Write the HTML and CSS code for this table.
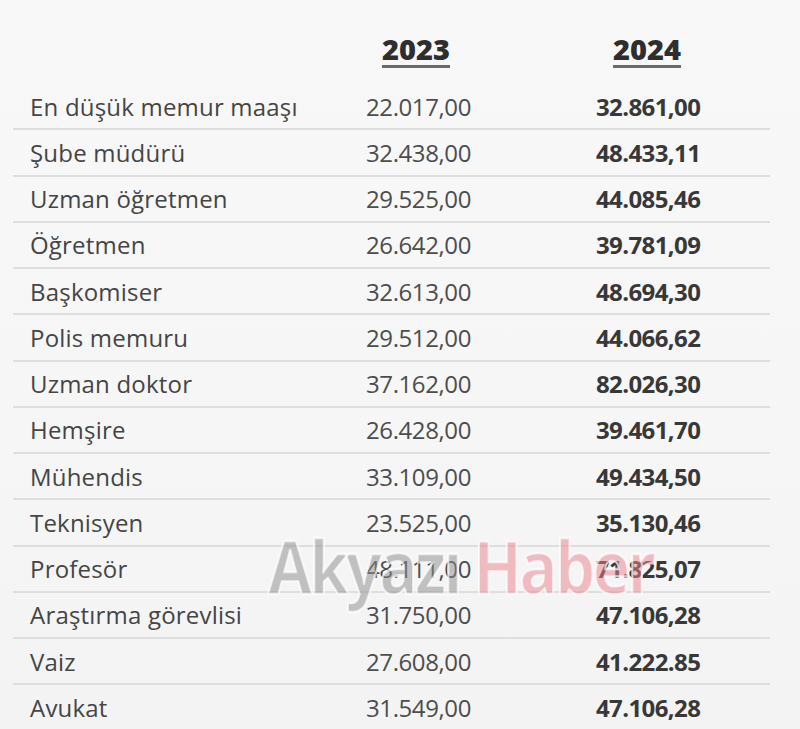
FILE: index.html
```html
<!DOCTYPE html>
<html lang="tr">
<head>
<meta charset="utf-8">
<link rel="stylesheet" href="styles.css">
</head>
<body>
<div class="page">
  <div class="table">
    <div class="row head">
      <div class="label"></div>
      <div class="year y1"><span>2023</span></div>
      <div class="year y2"><span>2024</span></div>
    </div>
    <div class="row"><div class="label">En düşük memur maaşı</div><div class="v1">22.017,00</div><div class="v2">32.861,00</div></div>
    <div class="row"><div class="label">Şube müdürü</div><div class="v1">32.438,00</div><div class="v2">48.433,11</div></div>
    <div class="row"><div class="label">Uzman öğretmen</div><div class="v1">29.525,00</div><div class="v2">44.085,46</div></div>
    <div class="row"><div class="label">Öğretmen</div><div class="v1">26.642,00</div><div class="v2">39.781,09</div></div>
    <div class="row"><div class="label">Başkomiser</div><div class="v1">32.613,00</div><div class="v2">48.694,30</div></div>
    <div class="row"><div class="label">Polis memuru</div><div class="v1">29.512,00</div><div class="v2">44.066,62</div></div>
    <div class="row"><div class="label">Uzman doktor</div><div class="v1">37.162,00</div><div class="v2">82.026,30</div></div>
    <div class="row"><div class="label">Hemşire</div><div class="v1">26.428,00</div><div class="v2">39.461,70</div></div>
    <div class="row"><div class="label">Mühendis</div><div class="v1">33.109,00</div><div class="v2">49.434,50</div></div>
    <div class="row"><div class="label">Teknisyen</div><div class="v1">23.525,00</div><div class="v2">35.130,46</div></div>
    <div class="row"><div class="label">Profesör</div><div class="v1">48.111,00</div><div class="v2">71.825,07</div></div>
    <div class="row"><div class="label">Araştırma görevlisi</div><div class="v1">31.750,00</div><div class="v2">47.106,28</div></div>
    <div class="row"><div class="label">Vaiz</div><div class="v1">27.608,00</div><div class="v2">41.222.85</div></div>
    <div class="row last"><div class="label">Avukat</div><div class="v1">31.549,00</div><div class="v2">47.106,28</div></div>
  </div>
  <div class="watermark"><span class="wm-a">Akyazı</span> <span class="wm-b">Haber</span></div>
</div>
</body>
</html>
```
FILE: styles.css
```css
html, body {
  margin: 0;
  padding: 0;
  background: #f7f7f7;
}
.page {
  position: relative;
  width: 800px;
  height: 729px;
  overflow: hidden;
  font-family: "Open Sans", "Noto Sans", sans-serif;
  background: linear-gradient(180deg, #f8f8f8 0%, #f6f6f6 60%, #f3f3f3 100%);
}
.table {
  display: flex;
  flex-direction: column;
  padding-left: 13px;
  width: 757px;
}
.row {
  display: grid;
  grid-template-columns: 353px 230px 174px;
  align-items: center;
  height: 44.25px;
  border-bottom: 2px solid #dedede;
}
.row.head {
  height: 84px;
  border-bottom: none;
  align-items: start;
}
.row.last { border-bottom: none; }
.label {
  padding-left: 17px;
  font-size: 24px;
  color: #454545;
  letter-spacing: 0.2px;
}
.v1 {
  font-size: 24px;
  color: #4d4d4d;
  letter-spacing: -0.4px;
}
.v2 {
  font-size: 24px;
  font-weight: 700;
  color: #383838;
  letter-spacing: -0.6px;
}
.year {
  padding-top: 29px;
  font-size: 29px;
  font-weight: 800;
  color: #2e2e2e;
}
.year span {
  border-bottom: 3px solid #6a6a6a;
  line-height: 32px;
  display: inline-block;
}
.y1 { padding-left: 16px; }
.y2 { padding-left: 17px; }
.watermark {
  position: absolute;
  left: 268px;
  top: 516px;
  font-family: "Open Sans", sans-serif;
  font-weight: 700;
  font-size: 64px;
  letter-spacing: -3px;
  white-space: nowrap;
  transform: scaleY(1.15);
  transform-origin: top left;
  -webkit-text-stroke: 2px rgba(255,255,255,0.7);
}
.wm-a { color: rgba(140,140,140,0.5); }
.wm-b { color: rgba(235,130,140,0.5); }
```
